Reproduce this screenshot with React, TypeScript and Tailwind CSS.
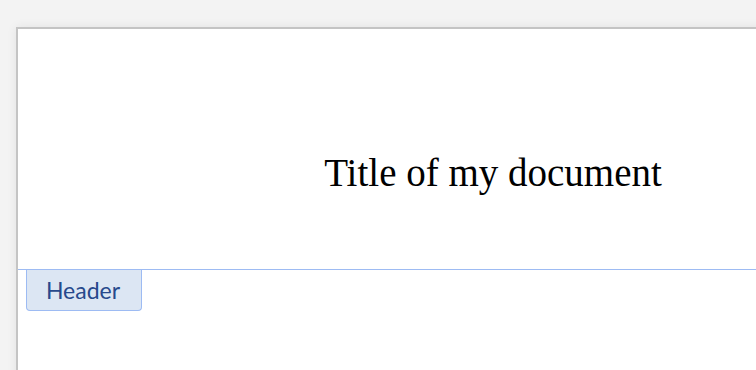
import React from 'react';

const App: React.FC = () => {
  return (
    <div className="w-[756px] h-[370px] overflow-hidden bg-[#f3f3f3] pt-[27px] pl-[16px]">
      {/* Page sheet */}
      <div className="w-[952px] h-[400px] bg-white border-t-2 border-l-2 border-[#c4c4c4] shadow-[0_0_10px_rgba(0,0,0,0.07)]">
        <div className="h-[240px] flex items-start justify-center pt-[120px]">
          <h1 className="text-[39px] leading-[48px] text-black font-['Liberation_Serif',serif]">
            Title of my document
          </h1>
        </div>

        {/* Header boundary */}
        <div className="h-px bg-[#9dbbf3]" />
        <div className="pl-[8px]">
          <div className="w-[116px] h-[41px] bg-[#dce6f3] border-x border-b border-[#9dbbf3] rounded-b-[4px] flex items-center justify-center pr-[2px]">
            <span className="text-[23px] text-[#27498c] font-['Lato',sans-serif]">Header</span>
          </div>
        </div>
      </div>
    </div>
  );
};

export default App;
